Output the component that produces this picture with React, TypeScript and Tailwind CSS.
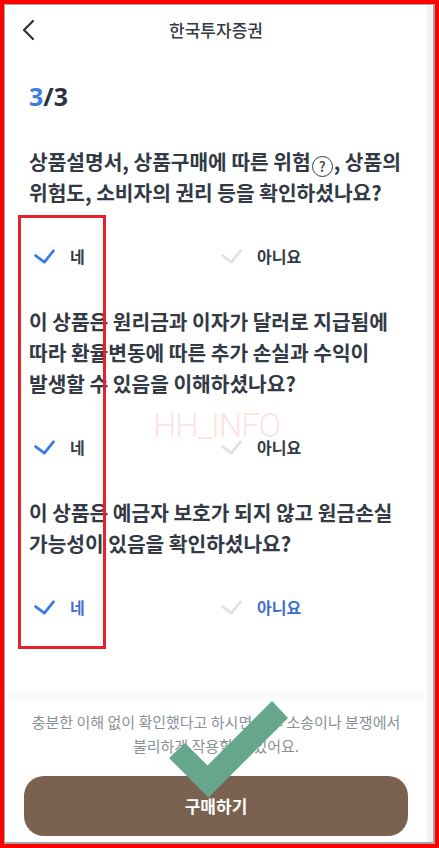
import React from "react";

function Check({ color }: { color: string }) {
  return (
    <svg width="21" height="15" viewBox="0 0 21 15" fill="none">
      <path
        d="M1.6 6.6 L10.4 13.2 L19.4 1.8"
        stroke={color}
        strokeWidth="2.8"
        strokeLinecap="round"
        strokeLinejoin="round"
      />
    </svg>
  );
}

function Options({ active }: { active?: boolean }) {
  const txt = active ? "text-[#3f6fcd]" : "text-[#333a45]";
  return (
    <div className="mt-[20px] grid grid-cols-2 h-[56px] items-center">
      <div className="flex items-center">
        <span className="ml-[5px] flex">
          <Check color="#3d7ce4" />
        </span>
        <span className={`ml-[15px] text-[16px] font-semibold ${txt}`}>네</span>
      </div>
      <div className="flex items-center">
        <span className="ml-[5px] flex">
          <Check color="#dfe2e7" />
        </span>
        <span className={`ml-[15px] text-[16px] font-semibold ${txt}`}>아니요</span>
      </div>
    </div>
  );
}

export default function App() {
  const q = "whitespace-nowrap text-[20.3px] leading-[31px] font-bold text-[#333a45]";
  return (
    <div className="relative w-[439px] h-[848px] bg-[#ff0000] p-[4px] overflow-hidden font-['Noto_Sans_CJK_KR','Noto_Sans',sans-serif]">
      <div className="flex h-full border-t border-l border-b-2 border-r-2 border-[#a4a4a4] bg-white">
        <div className="flex flex-col w-[422px] h-full bg-white">
          {/* header */}
          <div className="grid grid-cols-[48px_1fr_48px] h-[50px] items-center">
            <div className="pl-[16px] flex">
              <svg width="14" height="22" viewBox="0 0 14 22" fill="none">
                <path d="M12 2 L3 11 L12 20" stroke="#2a2f38" strokeWidth="2.2" strokeLinecap="round" strokeLinejoin="round" />
              </svg>
            </div>
            <div className="text-center text-[17px] font-medium text-[#353a42]">한국투자증권</div>
            <div />
          </div>

          <div className="px-[24px] mt-[26px] text-[25px] leading-[30px] font-bold font-['Noto_Sans','Noto_Sans_CJK_KR',sans-serif]">
            <span className="text-[#3d7ce4]">3</span>
            <span className="text-[#2b3240]">/3</span>
          </div>

          <div className="px-[24px] mt-[35px]">
            <p className={q}>
              상품설명서, 상품구매에 따른 위험
              <span className="inline-flex items-center justify-center w-[21px] h-[21px] rounded-full border-[1.7px] border-[#333a45] text-[14px] font-medium leading-none align-[-2px] mx-[1px]">
                ?
              </span>
              , 상품의
              <br />
              위험도, 소비자의 권리 등을 확인하셨나요?
            </p>
            <Options />

            <p className={`${q} mt-[22px]`}>
              이 상품은 원리금과 이자가 달러로 지급됨에
              <br />
              따라 환율변동에 따른 추가 손실과 수익이
              <br />
              발생할 수 있음을 이해하셨나요?
            </p>
            <Options />

            <p className={`${q} mt-[22px]`}>
              이 상품은 예금자 보호가 되지 않고 원금손실
              <br />
              가능성이 있음을 확인하셨나요?
            </p>
            <Options active />
          </div>

          <div className="flex-1 flex flex-col justify-end pb-[6px]">
            <div className="h-[16px] bg-gradient-to-b from-white via-[#f9f9f9] to-white" />
          </div>

          <div className="whitespace-nowrap text-center text-[15px] leading-[24px] text-[#8a8f98]">
            충분한 이해 없이 확인했다고 하시면 향후 소송이나 분쟁에서
            <br />
            불리하게 작용할 수 있어요.
          </div>
          <div className="mx-[19px] mt-[18px] mb-[6px] h-[60px] rounded-[20px] bg-[#7a6150] flex items-center justify-center text-white text-[17px] font-bold">
            구매하기
          </div>
        </div>
        <div className="flex-1 bg-[#f2f2f2]" />
      </div>

      {/* red highlight rectangle */}
      <div className="absolute left-[18px] top-[215px] w-[88px] h-[434px] border-[3px] border-[#e8222b] pointer-events-none" />

      {/* watermark */}
      <div className="absolute left-[153px] top-[413px] text-[33px] leading-[26px] font-light tracking-[-1px] text-[#fde3e3] font-['Roboto',sans-serif] pointer-events-none">
        HH_INFO
      </div>

      {/* green check overlay */}
      <svg className="absolute left-0 top-0 pointer-events-none" width="439" height="848" viewBox="0 0 439 848">
        <polygon points="169,758 185,743 207.5,765.5 272,701 288,718 208.5,797.5" fill="#66a68c" />
      </svg>
    </div>
  );
}
